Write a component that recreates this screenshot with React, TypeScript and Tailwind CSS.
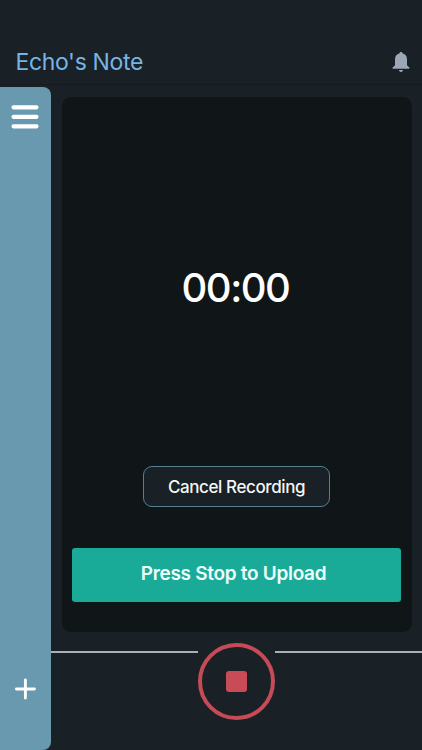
import React from 'react';

const BellIcon = () => (
  <svg className="h-[22px] w-[18px]" viewBox="0 0 18 22" fill="#9ca7b5">
    <path d="M9 1C8 1 7.4 1.7 7.3 2.5C4.5 3.2 3 5.3 3 8.2V13.4C3 14.4 2.3 15 1.4 15.7C.6 16.3 .4 16.6 .4 17C.4 17.5 .8 17.8 1.4 17.8H16.6C17.2 17.8 17.6 17.5 17.6 17C17.6 16.6 17.4 16.3 16.6 15.7C15.7 15 15 14.4 15 13.4V8.2C15 5.3 13.5 3.2 10.7 2.5C10.6 1.7 10 1 9 1Z" />
    <path d="M7 19H11C10.9 20.2 10 20.9 9 20.9S7.1 20.2 7 19Z" />
  </svg>
);

const MenuIcon = () => (
  <svg className="h-6 w-7" viewBox="0 0 28 24" fill="#ffffff">
    <rect x="0.5" y="0.3" width="27" height="4.1" rx="1.8" />
    <rect x="0.5" y="9.8" width="27" height="4.1" rx="1.8" />
    <rect x="0.5" y="19.3" width="27" height="4.1" rx="1.8" />
  </svg>
);

const PlusIcon = () => (
  <svg className="h-[22px] w-[22px]" viewBox="0 0 22 22" stroke="#ffffff" strokeWidth="2.9" strokeLinecap="round">
    <path d="M11.4 2V20M2.4 11H20.4" />
  </svg>
);

const Header = () => (
  <header className="flex h-[85px] shrink-0 items-end justify-between border-b border-[#151b20] pr-3 pb-[11px] pl-[15.5px]">
    <h1 className="relative top-0.5 font-['Inter',sans-serif] text-[23px] leading-[25px] tracking-[-0.35px] text-[#76b5e3]">
      Echo's Note
    </h1>
    <button aria-label="Notifications">
      <BellIcon />
    </button>
  </header>
);

const Sidebar = () => (
  <aside className="mt-0.5 flex w-[51px] shrink-0 flex-col items-center justify-between rounded-r-[8px] bg-[#6999ae] pt-[18px] pr-px pb-[50px]">
    <button aria-label="Menu">
      <MenuIcon />
    </button>
    <button aria-label="New note">
      <PlusIcon />
    </button>
  </aside>
);

const Recorder = () => (
  <section className="mx-[10.5px] mt-3 flex h-[535px] flex-col items-center rounded-[9px] bg-[#101517] px-[10.5px]">
    <div className="mt-[166px] pr-0.5 font-['Inter',sans-serif] text-[40px] leading-[50px] font-medium tracking-[-1.5px] text-white [font-feature-settings:'calt'_0]">
      00:00
    </div>
    <button className="mt-[152.5px] h-[41px] w-[187px] shrink-0 rounded-[9px] border border-[#587f91] bg-[#192026] pt-[3px] font-['Inter',sans-serif] text-[17px] font-medium tracking-[-0.4px] text-[#f4f6f7]">
      Cancel Recording
    </button>
    <button className="mt-[41px] h-[54px] w-full shrink-0 rounded-[3px] bg-[#1aaa98] pr-[6px] font-['Inter',sans-serif] text-[19px] font-semibold tracking-[-0.3px] text-[#edfffc]">
      Press Stop to Upload
    </button>
  </section>
);

const StopBar = () => (
  <div className="mt-[10.5px] flex items-start">
    <div className="mt-[8.5px] h-[1.5px] flex-1 bg-[#abb0b6]" />
    <button
      aria-label="Stop recording"
      className="flex h-[77px] w-[77px] items-center justify-center rounded-full border-4 border-[#c54c56]"
    >
      <span className="h-[21px] w-[21px] rounded-[3px] bg-[#c94b56]" />
    </button>
    <div className="mt-[8.5px] h-[1.5px] flex-1 bg-[#abb0b6]" />
  </div>
);

const App = () => {
  return (
    <div className="flex h-[750px] w-[422px] flex-col overflow-hidden bg-[#192026]">
      <Header />
      <div className="flex min-h-0 flex-1">
        <Sidebar />
        <main className="flex min-w-0 flex-1 flex-col">
          <Recorder />
          <StopBar />
        </main>
      </div>
    </div>
  );
};

export default App;
